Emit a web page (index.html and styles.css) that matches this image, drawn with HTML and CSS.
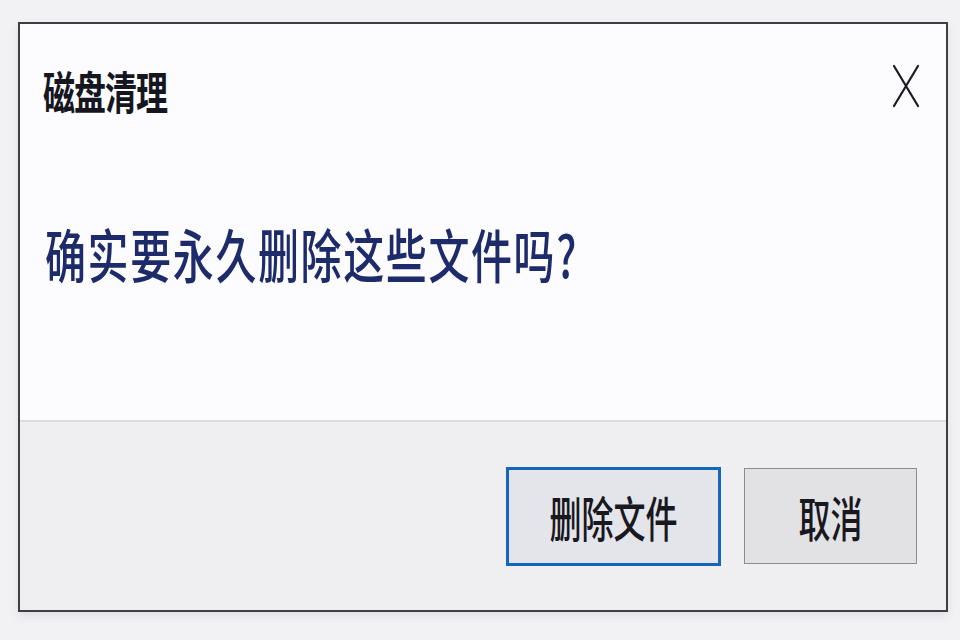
FILE: index.html
```html
<!DOCTYPE html>
<html lang="zh-CN">
<head>
<meta charset="utf-8">
<title>磁盘清理</title>
<link rel="stylesheet" href="styles.css">
</head>
<body>
<div class="dialog">
  <div class="upper">
    <div class="header">
      <span class="title">磁盘清理</span>
      <svg class="close" width="28" height="44" viewBox="0 0 28 44">
        <path d="M2 2 L26 42 M26 2 L2 42" stroke="#1a1a22" stroke-width="2.2" fill="none" stroke-linecap="round"/>
      </svg>
    </div>
    <div class="message"><span class="msg-text">确实要永久删除这些文件吗?</span></div>
  </div>
  <div class="footer">
    <button class="btn btn-primary"><span class="btn-text">删除文件</span></button>
    <button class="btn btn-cancel"><span class="btn-text">取消</span></button>
  </div>
</div>
</body>
</html>
```

FILE: styles.css
```css
html, body {
  margin: 0;
  padding: 0;
}
body {
  width: 960px;
  height: 640px;
  background: #f2f2f4;
  font-family: "Noto Sans CJK SC", "Noto Sans", sans-serif;
  overflow: hidden;
}
.dialog {
  margin: 22px 0 0 18px;
  width: 926px;
  height: 586px;
  border: 2px solid #3e3e46;
  display: flex;
  flex-direction: column;
  box-shadow: 0 4px 10px rgba(0, 0, 0, 0.08);
}
.upper {
  height: 398px;
  flex: none;
  background: #fcfcfe;
  border-bottom: 2px solid #dcdce0;
  box-sizing: border-box;
}
.header {
  height: 132px;
  display: flex;
  align-items: center;
  justify-content: space-between;
  padding: 0 26px 0 23px;
}
.title {
  display: inline-block;
  font-size: 32px;
  line-height: 40px;
  font-weight: 700;
  color: #16161e;
  transform: scaleY(1.42);
  letter-spacing: -1px;
}
.close {
  display: block;
  margin-top: -8px;
}
.message {
  margin-top: 66px;
  padding-left: 25px;
  height: 60px;
  display: flex;
  align-items: center;
}
.msg-text {
  display: inline-block;
  font-size: 41px;
  line-height: 44px;
  font-weight: 500;
  color: #1e2b6a;
  letter-spacing: 1.6px;
  transform: scaleY(1.42);
}
.footer {
  flex: 1;
  background: #efeff2;
  display: flex;
  justify-content: flex-end;
  align-items: center;
  gap: 23px;
  padding: 0 29px 0 0;
}
.btn {
  font-family: inherit;
  box-sizing: border-box;
  display: flex;
  align-items: center;
  justify-content: center;
  padding: 0;
  cursor: default;
  color: #18181e;
}
.btn-primary {
  width: 215px;
  height: 99px;
  border: 3px solid #1466b8;
  background: #e4e5ea;
}
.btn-cancel {
  width: 173px;
  height: 96px;
  border: 1px solid #8c8c90;
  background: #e2e2e5;
}
.btn-text {
  display: inline-block;
  font-size: 32px;
  line-height: 36px;
  font-weight: 500;
  transform: scaleY(1.5);
}
```
